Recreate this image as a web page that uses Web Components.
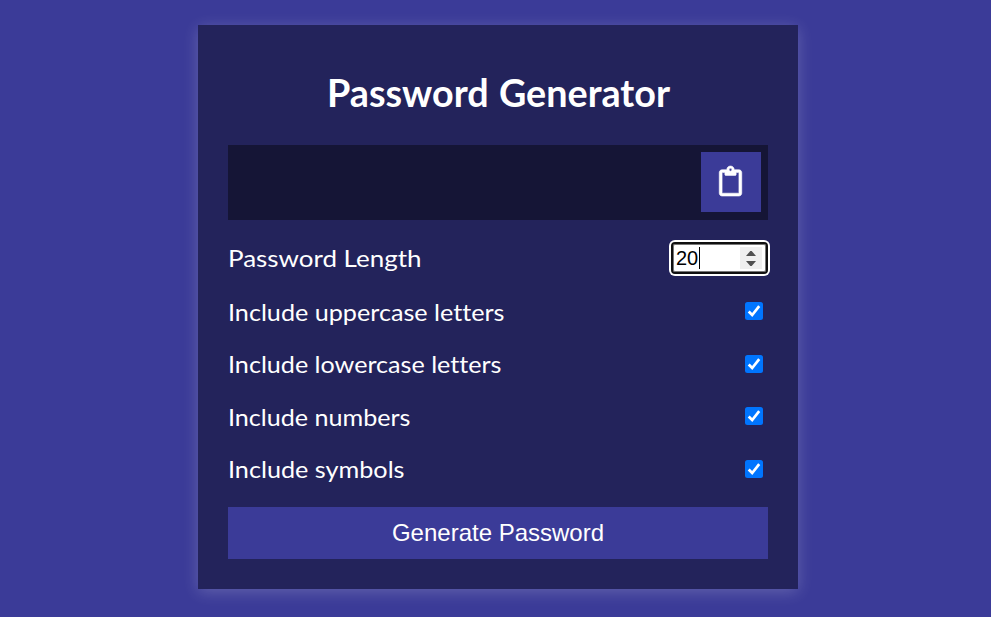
<!DOCTYPE html>
<html lang="en">
<head>
<meta charset="utf-8">
<title>Password Generator</title>
<style>
body{margin:0;height:617px;overflow:hidden;background:#3b3b98;color:#fff;font-family:Lato,"Open Sans",sans-serif;font-size:24px;font-variant-ligatures:none;display:flex;justify-content:center;align-items:flex-start;box-sizing:border-box;padding:25px 0 0 5px}
</style>
</head>
<body>
<password-card></password-card>
<script>
const make=(name,html,init)=>customElements.define(name,class extends HTMLElement{
  connectedCallback(){
    if(this.shadowRoot)return;
    this.attachShadow({mode:"open"}).innerHTML=html;
    if(init)init(this);
  }
});

/* Text widened to fill the width given in its attribute. */
make("fit-text",`<style>:host{display:inline-block;white-space:nowrap;text-align:left}span{display:inline-block;transform-origin:0 50%}</style><span><slot></slot></span>`,el=>{
  const s=el.shadowRoot.querySelector("span"),w=Number(el.getAttribute("width"));
  el.style.width=w+"px";
  s.style.transform="scaleX("+w/s.getBoundingClientRect().width+")";
});

make("copy-button",`<style>
:host{display:block;width:60px;height:60px}
button{width:100%;height:100%;border:0;padding:0;background:#3b3b98;color:#fff;display:grid;place-items:center}
svg{display:block;width:23px;height:30px;fill:currentColor;stroke:currentColor;stroke-width:10;overflow:visible;margin:-2px 1px 0 0}
</style><button aria-label="Copy"><svg viewBox="0 0 384 512"><path d="M336 64h-80c0-35.3-28.7-64-64-64s-64 28.7-64 64H48C21.5 64 0 85.5 0 112v352c0 26.5 21.5 48 48 48h288c26.5 0 48-21.5 48-48V112c0-26.5-21.5-48-48-48zM192 40c13.3 0 24 10.7 24 24s-10.7 24-24 24-24-10.7-24-24 10.7-24 24-24zm144 418c0 3.3-2.7 6-6 6H54c-3.3 0-6-2.7-6-6V118c0-3.3 2.7-6 6-6h42v36c0 6.6 5.4 12 12 12h168c6.6 0 12-5.4 12-12v-36h42c3.3 0 6 2.7 6 6z"/></svg></button>`);

make("result-box",`<style>
:host{display:flex;justify-content:flex-end;box-sizing:border-box;height:75px;padding:7px;background:#151536}
</style><copy-button></copy-button>`);

make("number-field",`<style>
:host{display:flex;align-items:center;box-sizing:border-box;width:97px;height:32px;background:#fff;border:2px solid #101010;border-radius:4px;
box-shadow:0 0 0 2px #fff,inset 0 0 0 1px #777;color:#000;font:20px "Liberation Sans",Arial,sans-serif;padding:0 4px 0 3px}
b{font-weight:400;line-height:22px;letter-spacing:-.1px}
i{width:1px;height:22px;background:#000;margin-left:.5px}
svg{display:block;margin-left:auto;width:22px;height:22px;background:#efefef;fill:#505050}
</style><b><slot></slot></b><i></i><svg viewBox="0 0 22 22"><path d="M6 9 10.3 4h1.4L16 9ZM6 14h10l-4.3 5h-1.4Z"/></svg>`);

make("setting-row",`<style>
:host{display:flex;justify-content:space-between;align-items:center;height:52.5px;line-height:30px}
</style><slot></slot><slot name="control"></slot>`);

make("check-box",`<style>
:host{display:block;width:18px;height:18px;margin:-2px 5px 0 0}
svg{display:block;width:18px;height:18px}
</style><svg viewBox="0 0 18 18"><rect width="18" height="18" rx="2.5" fill="#0075ff"/><path d="M3.7 9.5 7.2 13 14.2 4.2" fill="none" stroke="#fff" stroke-width="2.7"/></svg>`);

make("generate-button",`<style>
:host{display:block;height:52px}
button{width:100%;height:100%;border:0;padding:0;background:#3b3b98;color:#fff;font:24px "Liberation Sans",Arial,sans-serif}
</style><button><slot></slot></button>`);

make("password-card",`<style>
:host{display:block;box-sizing:border-box;width:600px;height:564px;padding:30px;background:#23235b;box-shadow:0 3px 15px rgba(255,255,255,.2)}
h2{margin:14px 0 29px;height:47px;line-height:47px;font-size:37.5px;font-weight:700;text-align:center;word-spacing:1px}
.length{height:54px;margin-top:11px;margin-bottom:1px}
setting-row:not(.length) fit-text{margin-bottom:1px}
generate-button{margin-top:11px}
</style>
<h2><fit-text width="343">Password Generator</fit-text></h2>
<result-box></result-box>
<setting-row class="length"><fit-text width="193.5">Password Length</fit-text><number-field slot="control">20</number-field></setting-row>
<setting-row><fit-text width="276.5">Include uppercase letters</fit-text><check-box slot="control"></check-box></setting-row>
<setting-row><fit-text width="273.5">Include lowercase letters</fit-text><check-box slot="control"></check-box></setting-row>
<setting-row><fit-text width="182.5">Include numbers</fit-text><check-box slot="control"></check-box></setting-row>
<setting-row><fit-text width="176.5">Include symbols</fit-text><check-box slot="control"></check-box></setting-row>
<generate-button>Generate Password</generate-button>`);
</script>
</body>
</html>
